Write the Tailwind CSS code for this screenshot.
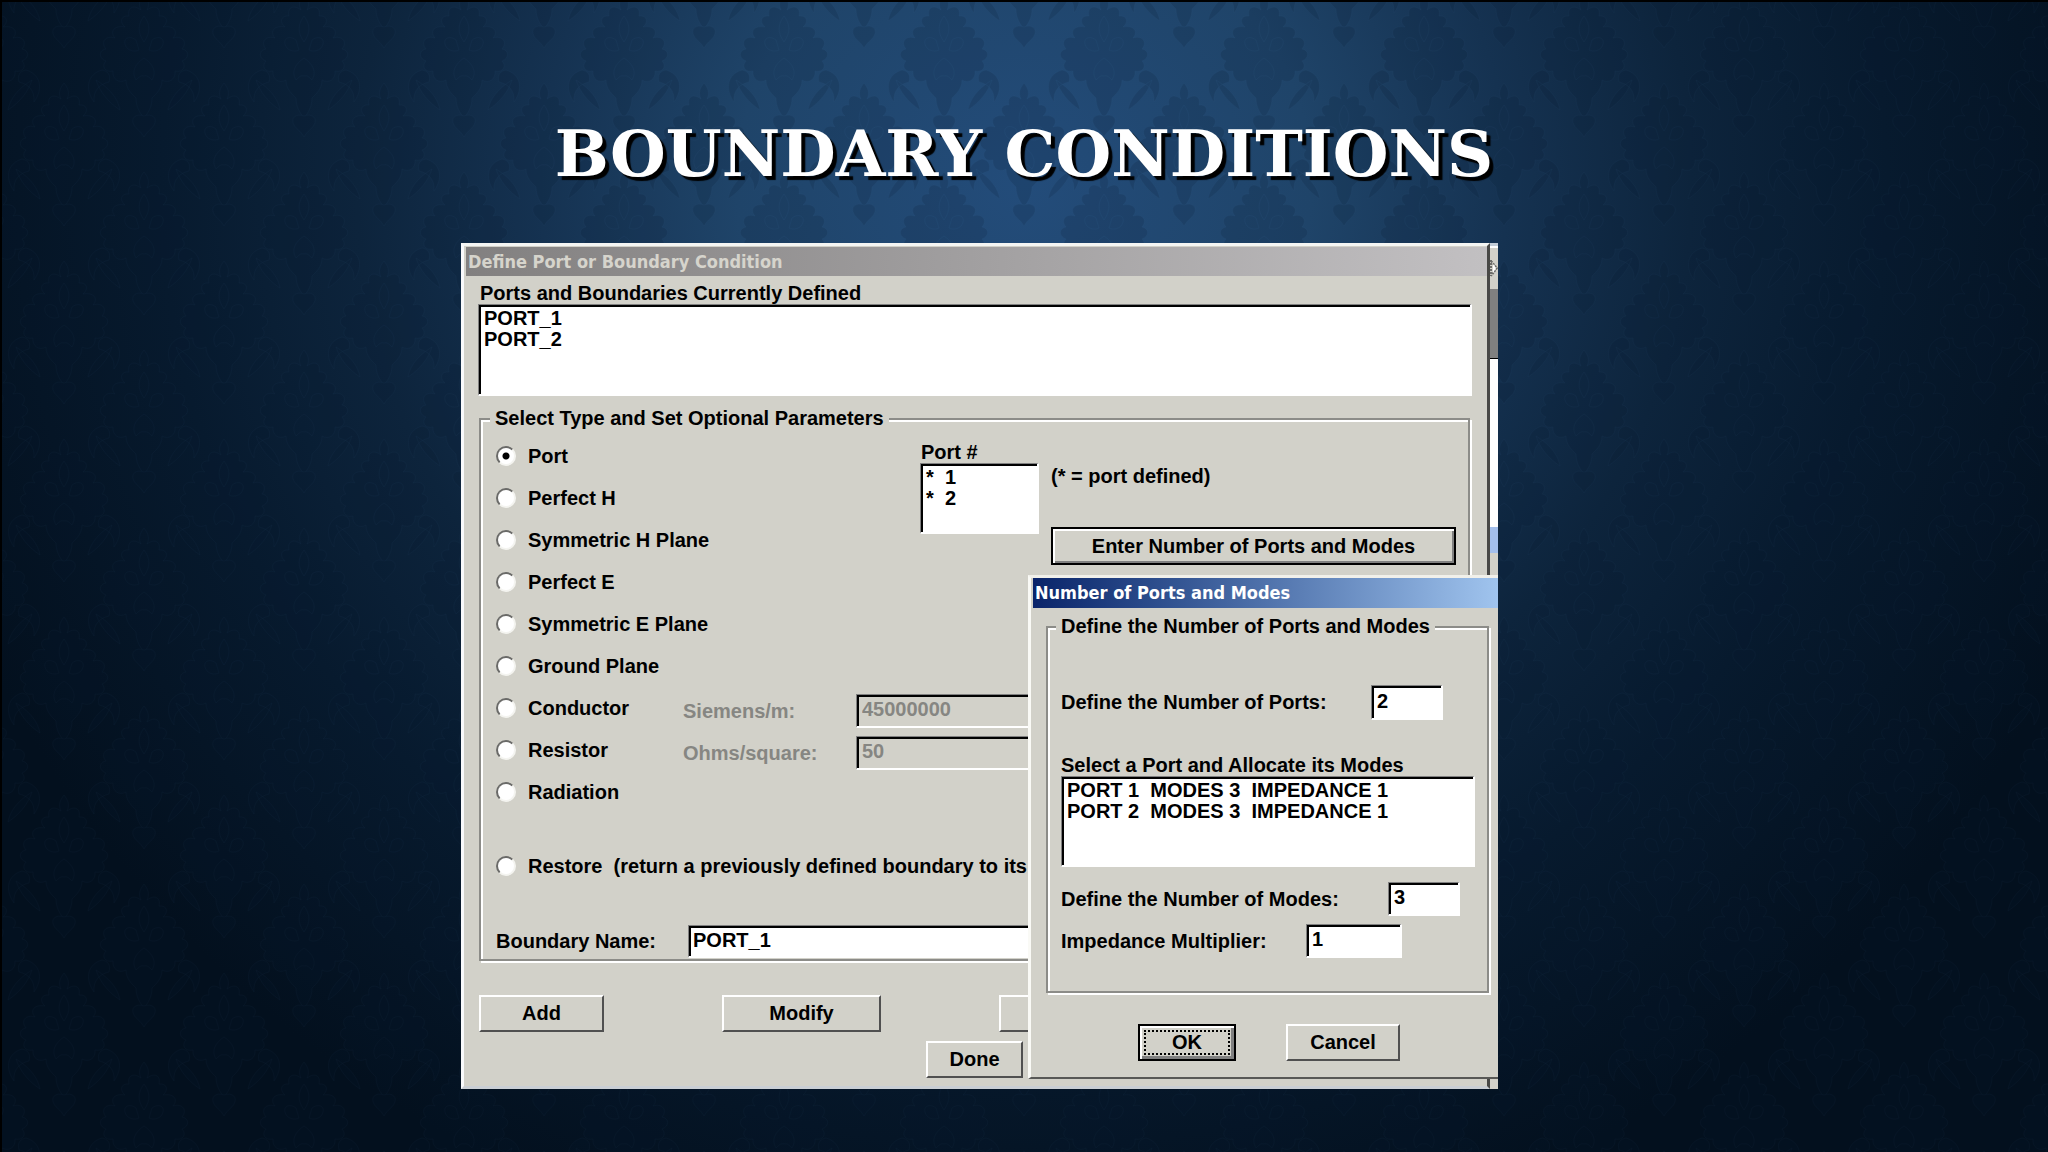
<!DOCTYPE html>
<html lang="en">
<head>
  <meta charset="UTF-8">
  <meta name="viewport" content="width=device-width, initial-scale=1.0">
  <title>Boundary Conditions</title>
  <script src="https://cdn.jsdelivr.net/npm/@tailwindcss/browser@4"></script>
</head>
<body class="relative min-h-screen overflow-x-hidden border-t-2 border-l-2 border-black bg-[#020c18] bg-[radial-gradient(ellipse_1150px_1100px_at_50%_16%,#234c7a_0%,#1f4469_25%,#153251_42%,#0d243c_58%,#071a2e_75%,#03101e_100%)] font-['Liberation_Sans',Arial,sans-serif] text-xl leading-[21px] text-black">

  <!-- Damask wallpaper -->
  <svg class="absolute inset-0 h-full w-full" aria-hidden="true">
    <defs>
      <g id="flower" fill="#04162c" stroke="#3a6492" stroke-width="1" stroke-opacity=".35">
        <path d="M0-62c4 5 6 10 3 16c8-6 14-2 12 6c8-1 10 6 4 11c10-2 16 4 10 11c9-3 15 4 9 11c7 1 8 9 0 12c5 5 1 12-7 10c1 8-6 13-13 9c0 9-6 14-10 18c0 9-4 15-8 20c-4-5-8-11-8-20c-4-4-10-9-10-18c-7 4-14-1-13-9c-8 2-12-5-7-10c-8-3-7-11 0-12c-6-7 0-14 9-11c-6-7 0-13 10-11c-6-5-4-12 4-11c-2-8 4-12 12-6c-3-6-1-11 3-16z"/>
        <path d="M0-40c6 8 7 16 0 26c-7-10-6-18 0-26zM8-16c8-6 15 0 9 8c-3 3-8 4-12 2zM-8-16c-8-6-15 0-9 8c3 3 8 4 12 2zM0 2c9 6 13 14 8 22c-3-3-5-5-8-4c-3-1-5 1-8 4c-5-8-1-16 8-22z"/>
        <path d="M42 14c14 4 18 18 8 32c1-12-6-18-15-20c-2-7 1-11 7-12zM48 24c-4 12-12 22-24 30c2-10 8-20 24-30z"/>
        <path d="M-42 14c-14 4-18 18-8 32c-1-12 6-18 15-20c2-7-1-11-7-12zM-48 24c4 12 12 22 24 30c-2-10-8-20-24-30z"/>
        <path d="M0 60c8-3 14 2 10 9c-2 4-6 5-10 12c-4-7-8-8-10-12c-4-7 2-12 10-9z"/>
      </g>
      <pattern id="damask" width="160" height="178" patternUnits="userSpaceOnUse" x="62" y="-22">
        <use href="#flower" x="80" y="76"/>
        <use href="#flower" x="80" y="254"/>
        <use href="#flower" x="80" y="-102"/>
        <use href="#flower" x="0" y="-13"/>
        <use href="#flower" x="160" y="-13"/>
        <use href="#flower" x="0" y="165"/>
        <use href="#flower" x="160" y="165"/>
      </pattern>
    </defs>
    <rect width="100%" height="100%" fill="url(#damask)" opacity=".15"/>
  </svg>

  <main class="relative px-4 pt-[112px] pb-[62px] lg:pr-[550px] lg:pl-[459px]">
    <h1 class="text-center font-['DejaVu_Serif',serif] text-[64px] leading-[80px] font-bold whitespace-nowrap text-white [text-shadow:4px_4px_1px_#000] lg:-mr-[89px]">BOUNDARY CONDITIONS</h1>

    <div class="relative mt-[49px] flex overflow-hidden bg-[#d2d1c9] font-bold">

      <!-- Define Port or Boundary Condition -->
      <section class="min-w-0 flex-1 border-t-[3px] border-r-[3px] border-b-[3px] border-l-[3px] border-t-[#f4f5f3] border-r-[#484846] border-b-[#c9ced4] border-l-[#f8f9fb]">
        <h2 class="mt-px ml-[2px] h-[29px] bg-linear-to-r from-[#828080] to-[#c2c0c2] pl-[2px] font-['DejaVu_Sans_Condensed','DejaVu_Sans',sans-serif] text-lg leading-[29px] text-[#d6d4cc]">Define Port or Boundary Condition</h2>

        <form class="pt-[7px] pr-[15px] pb-2 pl-[14px]">
          <label for="defined" class="block pl-[2px]">Ports and Boundaries Currently Defined</label>
          <select id="defined" size="4" class="block h-[92px] w-full overflow-hidden border-t border-r-2 border-b-2 border-l border-t-[#808080] border-r-white border-b-white border-l-[#808080] bg-white pt-[2px] pl-[5px] shadow-[inset_2px_2px_0_#000]">
            <option class="h-[21px] min-h-0 p-0 leading-[21px] font-bold">PORT_1</option>
            <option class="h-[21px] min-h-0 p-0 leading-[21px] font-bold">PORT_2</option>
          </select>

          <fieldset class="mt-3 mr-[2px] ml-px border-2 border-[#8c8c88] pb-px pl-[15px] shadow-[2px_2px_0_#fff,inset_2px_2px_0_#fff]">
            <legend class="-ml-[6px] bg-[#d2d1c9] px-[5px]">Select Type and Set Optional Parameters</legend>

            <div class="flex pt-[6px]">
              <div class="w-[424px] shrink-0">
                <label class="flex h-[42px] items-center gap-3"><input type="radio" name="type" checked class="size-5 appearance-none rounded-full border-2 border-t-[#6a6a68] border-r-[#f4f4f0] border-b-[#f4f4f0] border-l-[#6a6a68] bg-white checked:bg-[radial-gradient(circle,#000_3px,#fff_4px)]">Port</label>
                <label class="flex h-[42px] items-center gap-3"><input type="radio" name="type" class="size-5 appearance-none rounded-full border-2 border-t-[#6a6a68] border-r-[#f4f4f0] border-b-[#f4f4f0] border-l-[#6a6a68] bg-white checked:bg-[radial-gradient(circle,#000_3px,#fff_4px)]">Perfect H</label>
                <label class="flex h-[42px] items-center gap-3"><input type="radio" name="type" class="size-5 appearance-none rounded-full border-2 border-t-[#6a6a68] border-r-[#f4f4f0] border-b-[#f4f4f0] border-l-[#6a6a68] bg-white checked:bg-[radial-gradient(circle,#000_3px,#fff_4px)]">Symmetric H Plane</label>
                <label class="flex h-[42px] items-center gap-3"><input type="radio" name="type" class="size-5 appearance-none rounded-full border-2 border-t-[#6a6a68] border-r-[#f4f4f0] border-b-[#f4f4f0] border-l-[#6a6a68] bg-white checked:bg-[radial-gradient(circle,#000_3px,#fff_4px)]">Perfect E</label>
                <label class="flex h-[42px] items-center gap-3"><input type="radio" name="type" class="size-5 appearance-none rounded-full border-2 border-t-[#6a6a68] border-r-[#f4f4f0] border-b-[#f4f4f0] border-l-[#6a6a68] bg-white checked:bg-[radial-gradient(circle,#000_3px,#fff_4px)]">Symmetric E Plane</label>
                <label class="flex h-[42px] items-center gap-3"><input type="radio" name="type" class="size-5 appearance-none rounded-full border-2 border-t-[#6a6a68] border-r-[#f4f4f0] border-b-[#f4f4f0] border-l-[#6a6a68] bg-white checked:bg-[radial-gradient(circle,#000_3px,#fff_4px)]">Ground Plane</label>
              </div>
              <div class="flex flex-1 items-start gap-3 pt-[7px] pr-3">
                <div class="w-[119px]">
                  <label for="port-no" class="block pl-px">Port #</label>
                  <select id="port-no" size="3" class="block h-[71px] w-full overflow-hidden border-t border-r-2 border-b-2 border-l border-t-[#808080] border-r-white border-b-white border-l-[#808080] bg-white pt-[2px] pl-[5px] shadow-[inset_2px_2px_0_#000]">
                    <option class="h-[21px] min-h-0 p-0 leading-[21px] font-bold">*&nbsp; 1</option>
                    <option class="h-[21px] min-h-0 p-0 leading-[21px] font-bold">*&nbsp; 2</option>
                  </select>
                </div>
                <div class="flex-1 pt-6">
                  <p>(* = port defined)</p>
                  <button type="button" class="mt-10 h-[38px] w-full border-2 border-black bg-[#d2d1c9] shadow-[inset_2px_2px_0_#fff,inset_-2px_-2px_0_#808080]">Enter Number of Ports and Modes</button>
                </div>
              </div>
            </div>

            <div class="flex h-[42px] items-center">
              <label class="flex w-[187px] items-center gap-3"><input type="radio" name="type" class="size-5 appearance-none rounded-full border-2 border-t-[#6a6a68] border-r-[#f4f4f0] border-b-[#f4f4f0] border-l-[#6a6a68] bg-white checked:bg-[radial-gradient(circle,#000_3px,#fff_4px)]">Conductor</label>
              <div class="flex flex-1 items-center pt-[6px] text-[#868682]">
                <label for="siemens" class="w-[173px]">Siemens/m:</label>
                <input id="siemens" type="text" value="45000000" disabled class="h-[34px] min-w-0 flex-1 border-t border-r-2 border-b-2 border-l border-t-[#808080] border-r-white border-b-white border-l-[#808080] pb-[2px] pl-[5px] shadow-[inset_2px_2px_0_#000]">
              </div>
            </div>
            <div class="flex h-[42px] items-center">
              <label class="flex w-[187px] items-center gap-3"><input type="radio" name="type" class="size-5 appearance-none rounded-full border-2 border-t-[#6a6a68] border-r-[#f4f4f0] border-b-[#f4f4f0] border-l-[#6a6a68] bg-white checked:bg-[radial-gradient(circle,#000_3px,#fff_4px)]">Resistor</label>
              <div class="flex flex-1 items-center pt-[6px] text-[#868682]">
                <label for="ohms" class="w-[173px]">Ohms/square:</label>
                <input id="ohms" type="text" value="50" disabled class="h-[34px] min-w-0 flex-1 border-t border-r-2 border-b-2 border-l border-t-[#808080] border-r-white border-b-white border-l-[#808080] pb-[2px] pl-[5px] shadow-[inset_2px_2px_0_#000]">
              </div>
            </div>
            <label class="flex h-[42px] items-center gap-3"><input type="radio" name="type" class="size-5 appearance-none rounded-full border-2 border-t-[#6a6a68] border-r-[#f4f4f0] border-b-[#f4f4f0] border-l-[#6a6a68] bg-white checked:bg-[radial-gradient(circle,#000_3px,#fff_4px)]">Radiation</label>
            <label class="mt-8 flex h-[42px] items-center gap-3 whitespace-nowrap"><input type="radio" name="type" class="size-5 appearance-none rounded-full border-2 border-t-[#6a6a68] border-r-[#f4f4f0] border-b-[#f4f4f0] border-l-[#6a6a68] bg-white checked:bg-[radial-gradient(circle,#000_3px,#fff_4px)]">Restore&nbsp; (return a previously defined boundary to its material)</label>

            <div class="mt-[38px] flex items-center">
              <label for="boundary" class="w-[192px]">Boundary Name:</label>
              <input id="boundary" type="text" value="PORT_1" class="h-[33px] min-w-0 flex-1 border-t border-r-2 border-b-2 border-l border-t-[#808080] border-r-white border-b-white border-l-[#808080] bg-white pb-[2px] pl-[4px] shadow-[inset_2px_2px_0_#000]">
            </div>
          </fieldset>

          <div class="mt-[34px] ml-px flex gap-[118px]">
            <button type="button" class="h-[37px] w-[125px] border-2 border-t-white border-r-[#505050] border-b-[#505050] border-l-white">Add</button>
            <button type="button" class="h-[37px] w-[159px] border-2 border-t-white border-r-[#505050] border-b-[#505050] border-l-white">Modify</button>
            <button type="button" class="h-[37px] w-[125px] border-2 border-t-white border-r-[#505050] border-b-[#505050] border-l-white">Delete</button>
          </div>
          <button type="button" class="mt-[9px] ml-[448px] block h-[37px] w-[97px] border-2 border-t-white border-r-[#505050] border-b-[#505050] border-l-white">Done</button>
        </form>
      </section>

      <!-- Sliver of the window behind -->
      <div class="flex w-2 flex-col bg-[#d2d1c9]">
        <div class="h-[5px] border-b-2 border-white bg-[#c3cdd8]"></div>
        <svg class="h-[41px] w-2" viewBox="0 0 8 41" fill="none">
          <path d="M1 12v16M1 13l6 7l-6 8" stroke="#6d6d6a" stroke-width="2" stroke-dasharray="2 1"/>
          <path d="M3 16l3 4l-3 5z" fill="#fff"/>
        </svg>
        <div class="h-[70px] border-b border-black bg-[#808080]"></div>
        <div class="h-[168px] bg-white"></div>
        <div class="h-[26px] bg-[#a3bfec]"></div>
      </div>

      <!-- Number of Ports and Modes -->
      <section class="absolute top-[332px] right-0 left-[567px] border-t-[3px] border-b-2 border-l-[3px] border-t-[#f1f0ea] border-b-[#585856] border-l-[#fafaf6] bg-[#d2d1c9]">
        <h2 class="ml-[2px] h-[30px] bg-linear-to-r from-[#0a246a] to-[#a0c4ee] pl-[2px] font-['DejaVu_Sans_Condensed','DejaVu_Sans',sans-serif] text-lg leading-[30px] text-white">Number of Ports and Modes</h2>
        <form class="pt-2 pr-[9px] pb-4 pl-[15px]">
          <fieldset class="border-2 border-[#8c8c88] pr-3 pb-[33px] pl-[13px] shadow-[2px_2px_0_#fff,inset_2px_2px_0_#fff]">
            <legend class="-ml-[5px] bg-[#d2d1c9] px-[5px]">Define the Number of Ports and Modes</legend>
            <div class="mt-[48px] flex items-center">
              <label for="ports" class="w-[310px]">Define the Number of Ports:</label>
              <input id="ports" type="text" value="2" class="h-[35px] w-[72px] border-t border-r-2 border-b-2 border-l border-t-[#808080] border-r-white border-b-white border-l-[#808080] bg-white pb-[2px] pl-[5px] shadow-[inset_2px_2px_0_#000]">
            </div>
            <label for="alloc" class="mt-[35px] block">Select a Port and Allocate its Modes</label>
            <select id="alloc" size="4" class="block h-[91px] w-full overflow-hidden border-t border-r-2 border-b-2 border-l border-t-[#808080] border-r-white border-b-white border-l-[#808080] bg-white pt-[2px] pl-[5px] shadow-[inset_2px_2px_0_#000]">
              <option class="h-[21px] min-h-0 p-0 leading-[21px] font-bold">PORT 1&nbsp; MODES 3&nbsp; IMPEDANCE 1</option>
              <option class="h-[21px] min-h-0 p-0 leading-[21px] font-bold">PORT 2&nbsp; MODES 3&nbsp; IMPEDANCE 1</option>
            </select>
            <div class="mt-[15px] flex items-center">
              <label for="modes" class="w-[327px]">Define the Number of Modes:</label>
              <input id="modes" type="text" value="3" class="h-[34px] w-[72px] border-t border-r-2 border-b-2 border-l border-t-[#808080] border-r-white border-b-white border-l-[#808080] bg-white pb-[2px] pl-[5px] shadow-[inset_2px_2px_0_#000]">
            </div>
            <div class="mt-2 flex items-center">
              <label for="impedance" class="w-[245px]">Impedance Multiplier:</label>
              <input id="impedance" type="text" value="1" class="h-[34px] w-[96px] border-t border-r-2 border-b-2 border-l border-t-[#808080] border-r-white border-b-white border-l-[#808080] bg-white pb-[2px] pl-[5px] shadow-[inset_2px_2px_0_#000]">
            </div>
          </fieldset>
          <div class="mt-[31px] flex gap-[50px] pl-[92px]">
            <button type="button" class="h-[37px] w-[98px] border-2 border-black p-1 shadow-[inset_2px_2px_0_#fff,inset_-3px_-3px_0_#808080]"><span class="block border-2 border-dotted border-black leading-[21px]">OK</span></button>
            <button type="button" class="h-[37px] w-[114px] border-2 border-t-white border-r-[#505050] border-b-[#505050] border-l-white">Cancel</button>
          </div>
        </form>
      </section>
    </div>
  </main>
</body>
</html>
